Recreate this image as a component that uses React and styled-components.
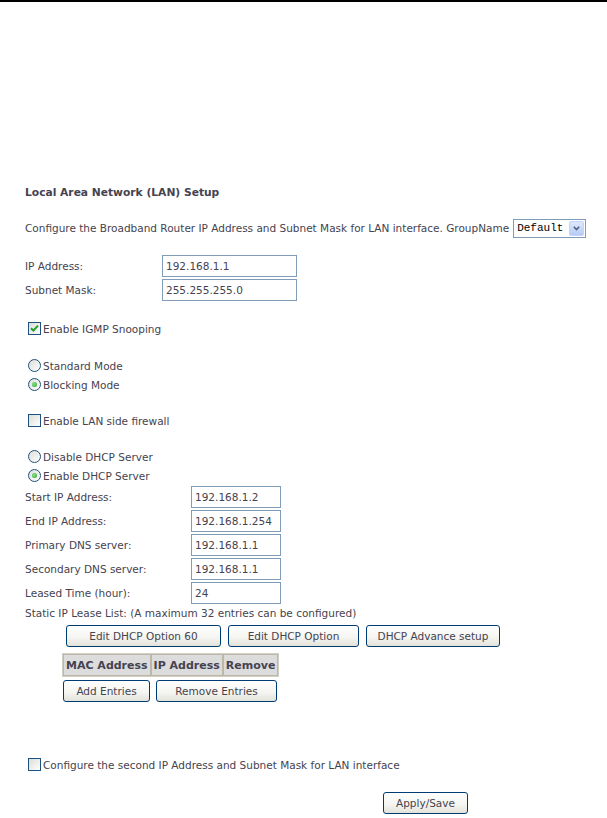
import React from 'react'
import styled, { createGlobalStyle } from 'styled-components'

const GlobalStyle = createGlobalStyle`
  html, body {
    margin: 0;
    padding: 0;
    background: #fff;
  }
  body {
    font-family: "DejaVu Sans", Tahoma, sans-serif;
    font-size: 10.5px;
    color: #45434f;
  }
`

const TopRule = styled.div`
  height: 2px;
  background: #000;
`

const Page = styled.main`
  padding-left: 25px;
`

const Title = styled.h1`
  margin: 184px 0 0;
  font-size: 10.7px;
  font-weight: 700;
  line-height: 14px;
  color: #45434f;
`

const ConfigRow = styled.div`
  margin-top: 18px;
  height: 20px;
  display: flex;
  align-items: center;
  gap: 4px;
`

const SelectBox = styled.div`
  width: 68px;
  height: 17px;
  border: 1px solid #7f9db9;
  display: flex;
  align-items: center;
  justify-content: space-between;
  font-family: "Liberation Mono", monospace;
  font-size: 11px;
  color: #000;
  padding-left: 3px;
  box-sizing: content-box;
`

const DropButton = styled.span`
  width: 15px;
  height: 15px;
  margin-right: 1px;
  border-radius: 2px;
  background: linear-gradient(#dfe9fd, #b6cbf6);
  border: 1px solid #c3d3fd;
  box-sizing: border-box;
  display: flex;
  align-items: center;
  justify-content: center;
`

const FormGrid = styled.div`
  display: grid;
  grid-template-columns: ${p => p.$label}px 135px;
  grid-auto-rows: 24px;
  margin-top: ${p => p.$top}px;
  align-items: center;
`

const Label = styled.span`
  line-height: 14px;
  white-space: nowrap;
`

const TextInput = styled.div`
  height: 22px;
  box-sizing: border-box;
  border: 1px solid #7f9db9;
  padding-left: 3px;
  display: flex;
  align-items: center;
  font-size: 10.5px;
  color: #45434f;
  width: ${p => p.$width}px;
`

const OptionRow = styled.label`
  display: flex;
  align-items: center;
  height: 19px;
  margin-top: ${p => p.$top || 0}px;
  padding-left: 3px;
`

const Box = styled.span`
  width: 13px;
  height: 13px;
  box-sizing: border-box;
  border: 1px solid #1c5180;
  background: linear-gradient(135deg, #dcdcd7, #ffffff);
  display: inline-flex;
  align-items: center;
  justify-content: center;
  margin-right: 2px;
`

const Radio = styled(Box)`
  border-radius: 50%;
`

const Dot = styled.span`
  width: 5px;
  height: 5px;
  border-radius: 50%;
  background: radial-gradient(circle at 40% 40%, #8fe28f, #21a121);
`

const StaticText = styled.div`
  line-height: 16px;
  height: 16px;
`

const ButtonRow = styled.div`
  display: flex;
  gap: ${p => p.$gap}px;
  margin-top: ${p => p.$top}px;
  margin-left: ${p => p.$left}px;
`

const Button = styled.button`
  height: 22px;
  width: ${p => p.$width}px;
  padding: 0;
  border: 1px solid #003c74;
  border-radius: 3px;
  background: linear-gradient(#ffffff 0%, #f4f4f0 60%, #e3e2da 100%);
  font-family: "DejaVu Sans", Tahoma, sans-serif;
  font-size: 10.5px;
  color: #45434f;
`

const LeaseTable = styled.table`
  margin: 6px 0 0 37px;
  border: 1px solid #d2cfc4;
  border-collapse: separate;
  border-spacing: 0;
  height: 24px;

  th {
    background: #dcdcdc;
    border: 1px solid #bcb8a8;
    padding: 0 2px;
    font-size: 11px;
    font-weight: 700;
    color: #45434f;
    height: 20px;
    white-space: nowrap;
  }
`

const Footer = styled.div`
  margin-left: 358px;
  margin-top: 18px;
  padding-bottom: 3px;
`

const Check = () => (
  <svg width="9" height="9" viewBox="0 0 9 9">
    <path d="M1 4.2 L3.4 6.6 L8 1.6" fill="none" stroke="#21a121" strokeWidth="2" />
  </svg>
)

const Chevron = () => (
  <svg width="7" height="5" viewBox="0 0 7 5">
    <path d="M0.8 0.8 L3.5 3.6 L6.2 0.8" fill="none" stroke="#4d6185" strokeWidth="1.6" />
  </svg>
)

const dhcpRows = [
  ['Start IP Address:', '192.168.1.2'],
  ['End IP Address:', '192.168.1.254'],
  ['Primary DNS server:', '192.168.1.1'],
  ['Secondary DNS server:', '192.168.1.1'],
  ['Leased Time (hour):', '24'],
]

export default function App() {
  return (
    <>
      <GlobalStyle />
      <TopRule />
      <Page>
        <Title>Local Area Network (LAN) Setup</Title>
        <ConfigRow>
          <span>Configure the Broadband Router IP Address and Subnet Mask for LAN interface. GroupName</span>
          <SelectBox>
            Default
            <DropButton><Chevron /></DropButton>
          </SelectBox>
        </ConfigRow>

        <FormGrid $label={137} $top={16}>
          <Label>IP Address:</Label>
          <TextInput $width={135}>192.168.1.1</TextInput>
          <Label>Subnet Mask:</Label>
          <TextInput $width={135}>255.255.255.0</TextInput>
        </FormGrid>

        <OptionRow $top={17}>
          <Box><Check /></Box>Enable IGMP Snooping
        </OptionRow>

        <OptionRow $top={18}>
          <Radio />Standard Mode
        </OptionRow>
        <OptionRow>
          <Radio><Dot /></Radio>Blocking Mode
        </OptionRow>

        <OptionRow $top={17}>
          <Box />Enable LAN side firewall
        </OptionRow>

        <OptionRow $top={17}>
          <Radio />Disable DHCP Server
        </OptionRow>
        <OptionRow>
          <Radio><Dot /></Radio>Enable DHCP Server
        </OptionRow>

        <FormGrid $label={166} $top={0}>
          {dhcpRows.map(([label, value]) => (
            <React.Fragment key={label}>
              <Label>{label}</Label>
              <TextInput $width={90}>{value}</TextInput>
            </React.Fragment>
          ))}
        </FormGrid>

        <StaticText>Static IP Lease List: (A maximum 32 entries can be configured)</StaticText>

        <ButtonRow $gap={7} $top={4} $left={41}>
          <Button $width={155}>Edit DHCP Option 60</Button>
          <Button $width={131}>Edit DHCP Option</Button>
          <Button $width={134}>DHCP Advance setup</Button>
        </ButtonRow>

        <LeaseTable>
          <thead>
            <tr>
              <th>MAC Address</th>
              <th>IP Address</th>
              <th>Remove</th>
            </tr>
          </thead>
        </LeaseTable>

        <ButtonRow $gap={6} $top={3} $left={38}>
          <Button $width={87}>Add Entries</Button>
          <Button $width={121}>Remove Entries</Button>
        </ButtonRow>

        <OptionRow $top={53}>
          <Box />Configure the second IP Address and Subnet Mask for LAN interface
        </OptionRow>

        <Footer>
          <Button $width={85}>Apply/Save</Button>
        </Footer>
      </Page>
    </>
  )
}
